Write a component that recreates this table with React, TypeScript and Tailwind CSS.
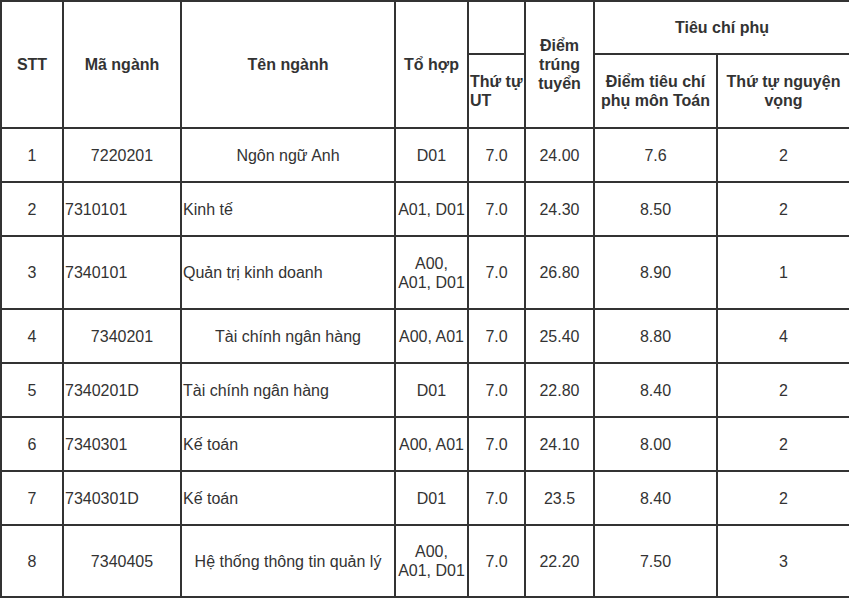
const rows = [
  { stt: "1", ma: "7220201", ten: "Ngôn ngữ Anh", to: "D01", ut: "7.0", diem: "24.00", toan: "7.6", nv: "2", center: true, h: "h-[54px]" },
  { stt: "2", ma: "7310101", ten: "Kinh tế", to: "A01, D01", ut: "7.0", diem: "24.30", toan: "8.50", nv: "2", center: false, h: "h-[54px]" },
  { stt: "3", ma: "7340101", ten: "Quản trị kinh doanh", to: "A00, A01, D01", ut: "7.0", diem: "26.80", toan: "8.90", nv: "1", center: false, h: "h-[73px]" },
  { stt: "4", ma: "7340201", ten: "Tài chính ngân hàng", to: "A00, A01", ut: "7.0", diem: "25.40", toan: "8.80", nv: "4", center: true, h: "h-[54px]" },
  { stt: "5", ma: "7340201D", ten: "Tài chính ngân hàng", to: "D01", ut: "7.0", diem: "22.80", toan: "8.40", nv: "2", center: false, h: "h-[54px]" },
  { stt: "6", ma: "7340301", ten: "Kế toán", to: "A00, A01", ut: "7.0", diem: "24.10", toan: "8.00", nv: "2", center: false, h: "h-[54px]" },
  { stt: "7", ma: "7340301D", ten: "Kế toán", to: "D01", ut: "7.0", diem: "23.5", toan: "8.40", nv: "2", center: false, h: "h-[54px]" },
  { stt: "8", ma: "7340405", ten: "Hệ thống thông tin quản lý", to: "A00, A01, D01", ut: "7.0", diem: "22.20", toan: "7.50", nv: "3", center: true, h: "h-[72px]" },
];

const cell = "border-2 border-[#333] p-0 px-[1px] align-middle";

export default function App() {
  return (
    <div className="w-[849px] h-[598px] bg-white overflow-hidden">
      <table
        className="w-[849px] table-fixed border-collapse text-[16px] leading-[19px] text-[#333]"
        style={{ fontFamily: '"Liberation Sans", Arial, sans-serif' }}
      >
        <colgroup>
          <col className="w-[62px]" />
          <col className="w-[118px]" />
          <col className="w-[214px]" />
          <col className="w-[73px]" />
          <col className="w-[57px]" />
          <col className="w-[69px]" />
          <col className="w-[123px]" />
          <col className="w-[133px]" />
        </colgroup>
        <thead className="font-bold">
          <tr className="h-[53px]">
            <th rowSpan={2} className={`${cell} text-center`}>STT</th>
            <th rowSpan={2} className={`${cell} text-center`}>Mã ngành</th>
            <th rowSpan={2} className={`${cell} text-center`}>Tên ngành</th>
            <th rowSpan={2} className={`${cell} text-center`}>Tổ hợp</th>
            <th className={cell}></th>
            <th rowSpan={2} className={`${cell} text-center`}>Điểm trúng tuyển</th>
            <th colSpan={2} className={`${cell} text-center`}>Tiêu chí phụ</th>
          </tr>
          <tr className="h-[74px]">
            <th className={`${cell} text-left`}>Thứ tự UT</th>
            <th className={`${cell} text-center`}>Điểm tiêu chí phụ môn Toán</th>
            <th className={`${cell} text-center`}>Thứ tự nguyện vọng</th>
          </tr>
        </thead>
        <tbody>
          {rows.map((r) => (
            <tr key={r.stt} className={r.h}>
              <td className={`${cell} text-center`}>{r.stt}</td>
              <td className={`${cell} ${r.center ? "text-center" : "text-left"}`}>{r.ma}</td>
              <td className={`${cell} ${r.center ? "text-center" : "text-left"}`}>{r.ten}</td>
              <td className={`${cell} text-center`}>{r.to}</td>
              <td className={`${cell} text-center`}>{r.ut}</td>
              <td className={`${cell} text-center`}>{r.diem}</td>
              <td className={`${cell} text-center`}>{r.toan}</td>
              <td className={`${cell} text-center`}>{r.nv}</td>
            </tr>
          ))}
        </tbody>
      </table>
    </div>
  );
}
